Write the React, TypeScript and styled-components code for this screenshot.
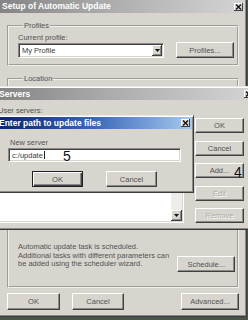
import React from 'react';
import styled, { createGlobalStyle } from 'styled-components';

const face = '#d8d5cf';

const GlobalStyle = createGlobalStyle`
  html, body {
    margin: 0;
    padding: 0;
    background: #4a5548;
  }
`;

const Desktop = styled.div`
  position: relative;
  width: 248px;
  height: 320px;
  overflow: hidden;
  background: #4a5548;
  font-family: "Liberation Sans", Arial, sans-serif;
  font-size: 7.5px;
  line-height: 9px;
  color: #535353;
`;

const Win = styled.div<{ $x: number; $y: number; $w: number; $h: number }>`
  position: absolute;
  left: ${p => p.$x}px;
  top: ${p => p.$y}px;
  width: ${p => p.$w}px;
  height: ${p => p.$h}px;
  box-sizing: border-box;
  display: flex;
  flex-direction: column;
  padding: 1px;
  background: ${face};
  border: 1px solid;
  border-color: #ebe9e5 #3c3c3c #3c3c3c #ebe9e5;
  box-shadow: inset 1px 1px 0 #fff, inset -1px -1px 0 #8a8a8a;
`;

const TitleBar = styled.div<{ $active?: boolean; $h: number }>`
  flex: none;
  height: ${p => p.$h}px;
  display: flex;
  align-items: center;
  gap: 4px;
  padding: 0 2px;
  background: ${p =>
    p.$active
      ? 'linear-gradient(to right, #0a246a 0%, #3a68b8 50%, #a6caf0 100%)'
      : 'linear-gradient(to right, #848484 0%, #adadad 45%, #d4d4d4 100%)'};
`;

const TitleText = styled.span`
  flex: 1;
  color: #fff;
  font-weight: bold;
  font-size: 8.5px;
  white-space: nowrap;
  overflow: hidden;
`;

const CloseBox = styled.div`
  flex: none;
  width: 9px;
  height: 8px;
  display: flex;
  align-items: center;
  justify-content: center;
  background: ${face};
  box-shadow: inset -1px -1px 0 #404040, inset 1px 1px 0 #fff;
`;

const Body = styled.div<{ $pad: string }>`
  flex: 1;
  display: flex;
  flex-direction: column;
  padding: ${p => p.$pad};
  min-height: 0;
`;

const Group = styled.fieldset<{ $grow?: boolean; $top: number; $bottom?: number }>`
  margin: ${p => p.$top}px 0 0 0;
  padding: 3px 3px ${p => p.$bottom ?? 6}px 9px;
  border: 2px groove #f2f0ec;
  min-width: 0;
  display: flex;
  flex-direction: column;
  justify-content: flex-end;
  flex: ${p => (p.$grow ? 1 : 'none')};
`;

const Legend = styled.legend`
  padding: 0 1px;
  margin-left: 5px;
  line-height: 9px;
`;

const Label = styled.div<{ $indent?: number }>`
  padding-left: ${p => p.$indent ?? 0}px;
  white-space: nowrap;
`;

const ProfileRow = styled.div`
  display: grid;
  grid-template-columns: 146px 58px;
  column-gap: 12px;
  align-items: end;
`;

const Field = styled.div<{ $h: number }>`
  box-sizing: border-box;
  height: ${p => p.$h}px;
  margin-top: 1px;
  display: flex;
  align-items: stretch;
  background: #fff;
  border: 1px solid;
  border-color: #8a8a8a #fff #fff #8a8a8a;
  box-shadow: inset 1px 1px 0 #404040, inset -1px -1px 0 ${face};
  padding: 1px;
  position: relative;
`;

const FieldText = styled.div`
  flex: 1;
  display: flex;
  align-items: center;
  padding-left: 2px;
  color: #3a3a3a;
  white-space: nowrap;
`;

const Caret = styled.span`
  display: inline-block;
  width: 1px;
  height: 8px;
  background: #222;
  margin-left: 1px;
`;

const DropButton = styled.div`
  flex: none;
  width: 10px;
  display: flex;
  align-items: center;
  justify-content: center;
  background: ${face};
  box-shadow: inset -1px -1px 0 #404040, inset 1px 1px 0 #fff, inset -2px -2px 0 #8a8a8a;
`;

const LocationBlock = styled.div`
  height: 30px;
`;

const Button = styled.button<{ $w: number; $h?: number; $default?: boolean }>`
  position: relative;
  flex: none;
  box-sizing: border-box;
  width: ${p => p.$w}px;
  height: ${p => p.$h ?? 16}px;
  margin: 0;
  padding: 0;
  font: inherit;
  color: #535353;
  background: ${face};
  border: 1px solid;
  border-color: ${p => (p.$default ? '#202020' : '#fff #404040 #404040 #fff')};
  box-shadow: ${p =>
    p.$default
      ? 'inset 1px 1px 0 #fff, inset -1px -1px 0 #404040, inset -2px -2px 0 #8a8a8a'
      : 'inset -1px -1px 0 #8a8a8a'};
  &:disabled {
    color: #aba9a4;
    text-shadow: 1px 1px 0 #fff;
  }
`;

const Marker = styled.span<{ $x: number; $y: number }>`
  position: absolute;
  left: ${p => p.$x}px;
  top: ${p => p.$y}px;
  font-family: "Liberation Sans", Arial, sans-serif;
  font-size: 14px;
  line-height: 12px;
  color: #111;
  text-shadow: none;
`;

const ScheduleRow = styled.div`
  display: grid;
  grid-template-columns: 1fr 58px;
  column-gap: 8px;
  align-items: end;
`;

const Note = styled.p`
  margin: 0 0 3px 0;
  line-height: 8.6px;
  white-space: nowrap;
`;

const ButtonRow = styled.div<{ $center?: boolean; $gap: number; $top: number }>`
  flex: none;
  display: flex;
  gap: ${p => p.$gap}px;
  margin-top: ${p => p.$top}px;
  justify-content: ${p => (p.$center ? 'center' : 'flex-start')};
`;

const Spacer = styled.div`
  flex: 1;
`;

const ServersGrid = styled.div`
  flex: 1;
  display: grid;
  grid-template-columns: 1fr 49px;
  column-gap: 11px;
  margin-top: 3px;
`;

const ListBox = styled.div`
  box-sizing: border-box;
  display: flex;
  background: #fff;
  border: 1px solid;
  border-color: #8a8a8a #fff #fff #8a8a8a;
  box-shadow: inset 1px 1px 0 #404040, inset -1px -1px 0 ${face};
  padding: 2px 1px 1px 2px;
`;

const ListArea = styled.div`
  flex: 1;
`;

const ScrollBar = styled.div`
  flex: none;
  width: 11px;
  display: flex;
  flex-direction: column;
  justify-content: flex-end;
  background: #eeedea;
`;

const ScrollArrow = styled.div`
  height: 11px;
  display: flex;
  align-items: center;
  justify-content: center;
  background: ${face};
  box-shadow: inset -1px -1px 0 #404040, inset 1px 1px 0 #fff, inset -2px -2px 0 #8a8a8a;
`;

const ButtonColumn = styled.div`
  display: flex;
  flex-direction: column;
  justify-content: space-between;
`;

function CloseIcon() {
  return (
    <svg width="7" height="6" viewBox="0 0 7 6">
      <path d="M1 0.5 L6 5.5 M6 0.5 L1 5.5" stroke="#111" strokeWidth="1.3" />
    </svg>
  );
}

function DownArrow() {
  return (
    <svg width="5" height="3" viewBox="0 0 5 3">
      <path d="M0 0 H5 L2.5 3 Z" fill="#111" />
    </svg>
  );
}

export default function App() {
  return (
    <>
      <GlobalStyle />
      <Desktop>
        <Win $x={-2} $y={-2} $w={249} $h={319}>
          <TitleBar $h={13}>
            <TitleText>Setup of Automatic Update</TitleText>
            <CloseBox>
              <CloseIcon />
            </CloseBox>
          </TitleBar>
          <Body $pad="0 6px 5px 7px">
            <Group $top={8}>
              <Legend>Profiles</Legend>
              <Label>Current profile:</Label>
              <ProfileRow>
                <Field $h={15}>
                  <FieldText>My Profile</FieldText>
                  <DropButton>
                    <DownArrow />
                  </DropButton>
                </Field>
                <Button $w={58}>Profiles...</Button>
              </ProfileRow>
            </Group>
            <Group $top={8}>
              <Legend>Location</Legend>
              <LocationBlock />
            </Group>
            <Group $top={8} $bottom={14} $grow>
              <ScheduleRow>
                <Note>
                  Automatic update task is scheduled.
                  <br />
                  Additional tasks with different parameters can
                  <br />
                  be added using the scheduler wizard.
                </Note>
                <Button $w={58}>Schedule...</Button>
              </ScheduleRow>
            </Group>
            <ButtonRow $gap={12} $top={5}>
              <Button $w={53} $h={17}>OK</Button>
              <Button $w={52} $h={17}>Cancel</Button>
              <Spacer />
              <Button $w={58} $h={17}>Advanced...</Button>
            </ButtonRow>
          </Body>
        </Win>

        <Win $x={-5} $y={86} $w={262} $h={144}>
          <TitleBar $h={12}>
            <TitleText>Servers</TitleText>
            <CloseBox>
              <CloseIcon />
            </CloseBox>
          </TitleBar>
          <Body $pad="6px 11px 5px 1px">
            <Label>User servers:</Label>
            <ServersGrid>
              <ListBox>
                <ListArea />
                <ScrollBar>
                  <ScrollArrow>
                    <DownArrow />
                  </ScrollArrow>
                </ScrollBar>
              </ListBox>
              <ButtonColumn>
                <Button $w={49} $h={15}>OK</Button>
                <Button $w={49} $h={15}>Cancel</Button>
                <Button $w={49} $h={15}>
                  Add...
                  <Marker $x={38} $y={2}>4</Marker>
                </Button>
                <Button $w={49} $h={15} disabled>Edit</Button>
                <Button $w={49} $h={15} disabled>Remove</Button>
              </ButtonColumn>
            </ServersGrid>
          </Body>
        </Win>

        <Win $x={-5} $y={115} $w={199} $h={78}>
          <TitleBar $active $h={12}>
            <TitleText>Enter path to update files</TitleText>
            <CloseBox>
              <CloseIcon />
            </CloseBox>
          </TitleBar>
          <Body $pad="9px 11px 4px 11px">
            <Label $indent={2}>New server</Label>
            <Field $h={14}>
              <FieldText>
                c:/update
                <Caret />
              </FieldText>
              <Marker $x={54} $y={1}>5</Marker>
            </Field>
            <ButtonRow $center $gap={23} $top={9}>
              <Button $w={51} $default>OK</Button>
              <Button $w={51}>Cancel</Button>
            </ButtonRow>
          </Body>
        </Win>
      </Desktop>
    </>
  );
}
